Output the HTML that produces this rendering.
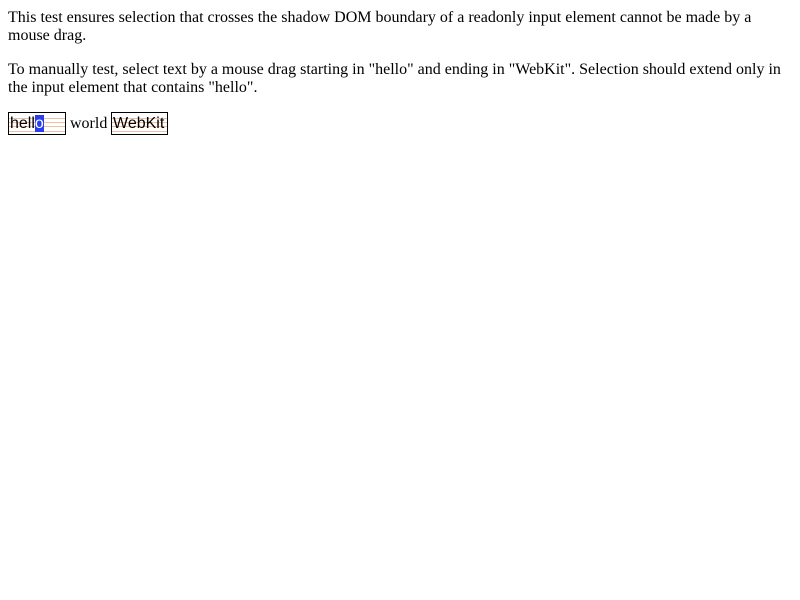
<html><head><style>
body{margin:0;background:#fff;font-family:"Liberation Serif",serif;font-size:16px;color:#000}
p{position:absolute;left:8px;margin:0;width:784px;line-height:18px}
.box{position:absolute;top:112px;height:21px;border:1px solid #000;overflow:hidden;background:
linear-gradient(#f0c0a0,#f0c0a0) 0 5px/100% 1px no-repeat,
linear-gradient(#f0c0a0,#f0c0a0) 0 9px/100% 1px no-repeat,
linear-gradient(#f0c0a0,#f0c0a0) 0 13px/100% 1px no-repeat,
linear-gradient(#f0c0a0,#f0c0a0) 0 18px/100% 1px no-repeat;}
.t{position:absolute;left:1px;top:1px;font-family:"Liberation Sans",sans-serif;font-size:16px;line-height:19px}
.sel{background:#2a3df0;color:#fff}
</style></head><body>
<p style="top:9px">This test ensures selection that crosses the shadow DOM boundary of a readonly input element cannot be made by a mouse drag.</p>
<p style="top:61px">To manually test, select text by a mouse drag starting in "hello" and ending in "WebKit". Selection should extend only in the input element that contains "hello".</p>
<div class="box" style="left:8px;width:56px"><span class="t">hell<span class="sel">o</span></span></div>
<span style="position:absolute;left:70px;top:115px">world</span>
<div class="box" style="left:111px;width:55px"><span class="t">WebKit</span></div>
</body></html>
